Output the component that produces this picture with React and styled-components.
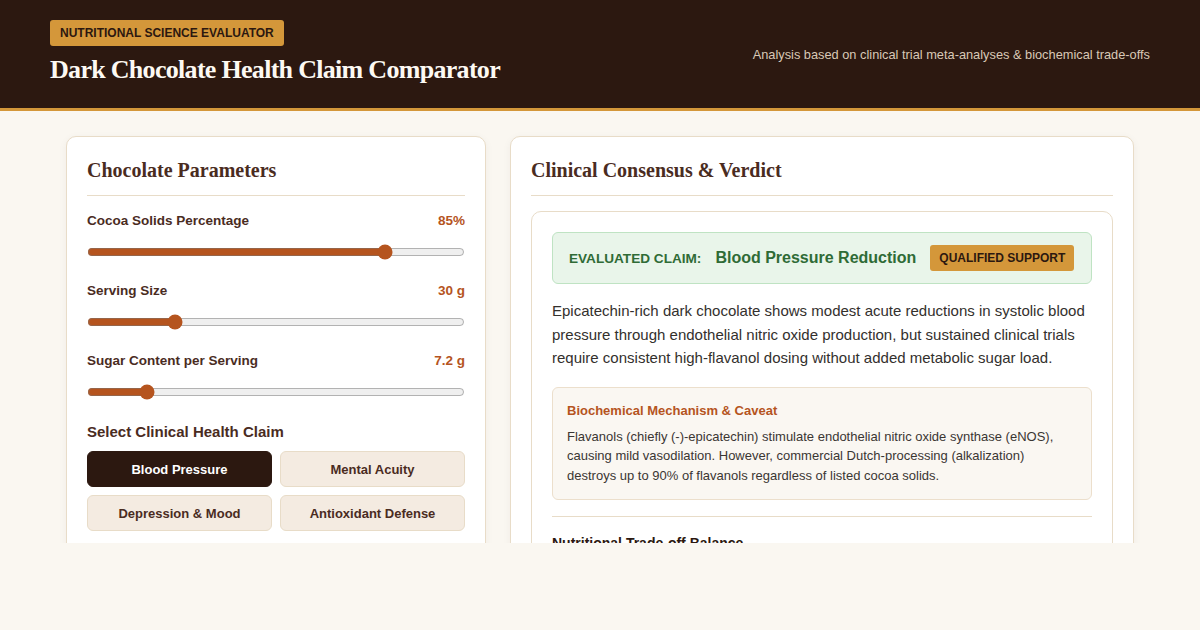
import React, { useState } from 'react';
import styled, { createGlobalStyle } from 'styled-components';

const GlobalStyle = createGlobalStyle`
  * { box-sizing: border-box; }
  body {
    margin: 0;
    background: #faf7f1;
    font-family: "Liberation Sans", Arial, sans-serif;
    color: #4a2c1f;
  }
`;

const Header = styled.header`
  display: flex;
  justify-content: space-between;
  align-items: flex-start;
  height: 111px;
  padding: 20px 50px 0;
  background: #2c1810;
  border-bottom: 3px solid #d4973a;
`;

const HeaderLeft = styled.div`
  display: flex;
  flex-direction: column;
  align-items: flex-start;
  gap: 9px;
`;

const Kicker = styled.span`
  display: inline-block;
  background: #d4973a;
  color: #2c1810;
  font-size: 12px;
  font-weight: bold;
  line-height: 26px;
  padding: 0 10px;
  border-radius: 3px;
`;

const Title = styled.h1`
  margin: 0;
  font-family: "Liberation Serif", "Times New Roman", serif;
  font-size: 26px;
  line-height: 30px;
  font-weight: bold;
  letter-spacing: -0.7px;
  color: #fdf9f3;
`;

const Subtitle = styled.p`
  margin: 27px 0 0;
  font-size: 12.8px;
  color: #d9c8b6;
`;

const Main = styled.main`
  height: 432px;
  overflow: hidden;
  padding-top: 25px;
  display: flex;
  justify-content: center;
  gap: 24px;
`;

const Card = styled.section`
  width: ${p => p.$width}px;
  flex-shrink: 0;
  align-self: flex-start;
  background: #fff;
  border: 1px solid #e8dcc8;
  border-radius: 10px;
  padding: 20px 20px 24px;
  box-shadow: 0 2px 8px rgba(60, 30, 10, 0.05);
`;

const CardTitle = styled.h2`
  margin: 0 0 ${p => p.$gap || 17}px;
  padding-bottom: 11px;
  border-bottom: 1px solid #e8dcc8;
  font-family: "Liberation Serif", "Times New Roman", serif;
  font-size: 20px;
  line-height: 27px;
  font-weight: bold;
  color: #4a2c1f;
`;

const Control = styled.div`
  display: flex;
  flex-direction: column;
  gap: 15px;
  margin-bottom: 23px;
`;

const ControlHead = styled.div`
  display: flex;
  justify-content: space-between;
  font-size: 13.5px;
  font-weight: bold;
  line-height: 16px;
`;

const Value = styled.span`
  color: #b5541e;
`;

const Range = styled.input.attrs({ type: 'range' })`
  width: 100%;
  margin: 0;
  height: 16px;
  accent-color: #b5541e;
`;

const SectionLabel = styled.h3`
  margin: 0 0 10px;
  font-size: 15px;
  line-height: 18px;
  font-weight: bold;
  color: #4a2c1f;
`;

const ClaimGrid = styled.div`
  display: grid;
  grid-template-columns: 1fr 1fr;
  gap: 8px;
`;

const ClaimButton = styled.button`
  height: 36px;
  border-radius: 6px;
  border: 1px solid ${p => (p.$active ? '#2c1810' : '#e8dcc8')};
  background: ${p => (p.$active ? '#2c1810' : '#f4ebe1')};
  color: ${p => (p.$active ? '#fff' : '#4a2c1f')};
  font-family: "Liberation Sans", Arial, sans-serif;
  font-size: 13px;
  font-weight: bold;
  cursor: pointer;
`;

const Verdict = styled.div`
  border: 1px solid #e8dcc8;
  border-radius: 10px;
  padding: 20px;
`;

const ClaimBanner = styled.div`
  display: flex;
  align-items: center;
  height: 52px;
  padding: 0 16px;
  background: #e9f5ea;
  border: 1px solid #bfe3c3;
  border-radius: 6px;
  gap: 14px;
  white-space: nowrap;

  & > * { flex-shrink: 0; }
`;

const BannerLabel = styled.span`
  font-size: 13.6px;
  font-weight: bold;
  color: #2f6b36;
`;

const BannerClaim = styled.span`
  font-size: 16px;
  font-weight: bold;
  color: #2f6b36;
`;

const Badge = styled.span`
  background: #d4973a;
  color: #2c1810;
  font-size: 12px;
  font-weight: bold;
  padding: 0 9px;
  line-height: 26px;
  border-radius: 3px;
`;

const Summary = styled.p`
  margin: 15px 0 17px;
  font-size: 15px;
  line-height: 23.5px;
  color: #33302d;
`;

const Mechanism = styled.div`
  background: #faf7f2;
  border: 1px solid #ecdfcc;
  border-radius: 6px;
  padding: 14px;
`;

const MechTitle = styled.h4`
  margin: 0 0 8px;
  font-size: 13px;
  line-height: 17px;
  color: #b5541e;
`;

const MechText = styled.p`
  margin: 0;
  font-size: 13px;
  line-height: 19.5px;
  color: #3a3633;
`;

const Divider = styled.hr`
  border: 0;
  border-top: 1px solid #e8dcc8;
  margin: 16px 0 18px;
`;

const SubHead = styled.h4`
  margin: 0;
  font-size: 14px;
  font-weight: bold;
  color: #2c1810;
`;

const claims = ['Blood Pressure', 'Mental Acuity', 'Depression & Mood', 'Antioxidant Defense'];

export default function App() {
  const [cocoa, setCocoa] = useState(85);
  const [serving, setServing] = useState(30);
  const [sugar, setSugar] = useState(7.2);
  const [claim, setClaim] = useState('Blood Pressure');

  return (
    <>
      <GlobalStyle />
      <Header>
        <HeaderLeft>
          <Kicker>NUTRITIONAL SCIENCE EVALUATOR</Kicker>
          <Title>Dark Chocolate Health Claim Comparator</Title>
        </HeaderLeft>
        <Subtitle>Analysis based on clinical trial meta-analyses &amp; biochemical trade-offs</Subtitle>
      </Header>
      <Main>
        <Card $width={420}>
          <CardTitle>Chocolate Parameters</CardTitle>
          <Control>
            <ControlHead>
              <span>Cocoa Solids Percentage</span>
              <Value>{cocoa}%</Value>
            </ControlHead>
            <Range min={25} max={100} value={cocoa} onChange={e => setCocoa(+e.target.value)} />
          </Control>
          <Control>
            <ControlHead>
              <span>Serving Size</span>
              <Value>{serving} g</Value>
            </ControlHead>
            <Range min={10} max={100} value={serving} onChange={e => setServing(+e.target.value)} />
          </Control>
          <Control>
            <ControlHead>
              <span>Sugar Content per Serving</span>
              <Value>{sugar} g</Value>
            </ControlHead>
            <Range min={0} max={50} step={0.1} value={sugar} onChange={e => setSugar(+e.target.value)} />
          </Control>
          <SectionLabel>Select Clinical Health Claim</SectionLabel>
          <ClaimGrid>
            {claims.map(c => (
              <ClaimButton key={c} $active={c === claim} onClick={() => setClaim(c)}>
                {c}
              </ClaimButton>
            ))}
          </ClaimGrid>
        </Card>
        <Card $width={624}>
          <CardTitle $gap={15}>Clinical Consensus &amp; Verdict</CardTitle>
          <Verdict>
            <ClaimBanner>
              <BannerLabel>EVALUATED CLAIM:</BannerLabel>
              <BannerClaim>Blood Pressure Reduction</BannerClaim>
              <Badge>QUALIFIED SUPPORT</Badge>
            </ClaimBanner>
            <Summary>
              Epicatechin-rich dark chocolate shows modest acute reductions in systolic blood pressure
              through endothelial nitric oxide production, but sustained clinical trials require
              consistent high-flavanol dosing without added metabolic sugar load.
            </Summary>
            <Mechanism>
              <MechTitle>Biochemical Mechanism &amp; Caveat</MechTitle>
              <MechText>
                Flavanols (chiefly (-)-epicatechin) stimulate endothelial nitric oxide synthase (eNOS),
                causing mild vasodilation. However, commercial Dutch-processing (alkalization) destroys
                up to 90% of flavanols regardless of listed cocoa solids.
              </MechText>
            </Mechanism>
            <Divider />
            <SubHead>Nutritional Trade-off Balance</SubHead>
          </Verdict>
        </Card>
      </Main>
    </>
  );
}
